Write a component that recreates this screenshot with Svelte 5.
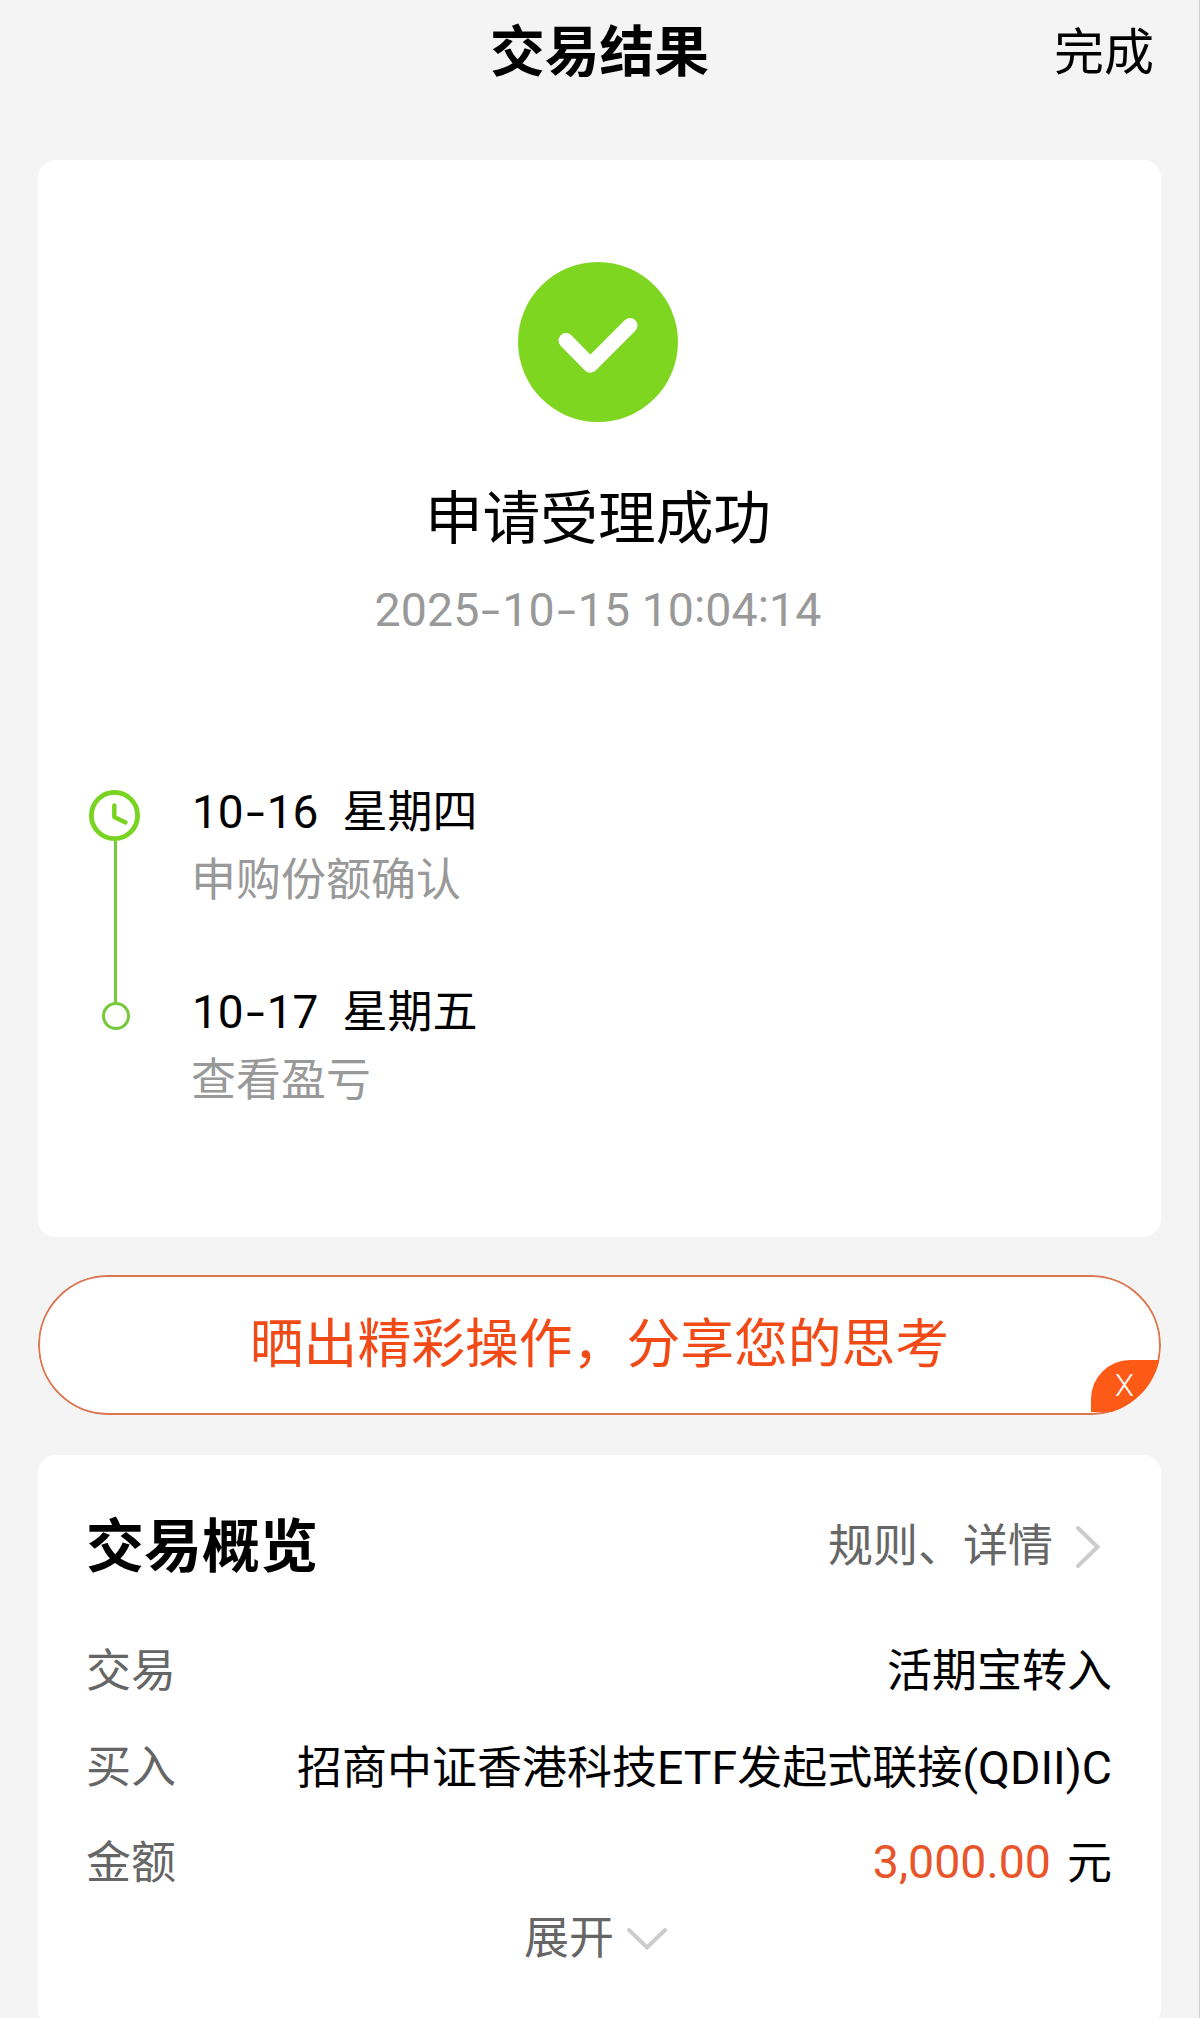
<script lang="ts">
  type Step = { month: string; day: string; weekday: string; note: string }

  const steps: Step[] = [
    { month: '10', day: '16', weekday: '星期四', note: '申购份额确认' },
    { month: '10', day: '17', weekday: '星期五', note: '查看盈亏' },
  ]
</script>

<div class="page">
  <header class="top-bar">
    <h1>交易结果</h1>
    <button class="done" type="button">完成</button>
  </header>

  <section class="card result">
    <svg class="success" viewBox="0 0 160 160" aria-hidden="true">
      <circle cx="80" cy="80" r="80" fill="#7ed621" />
      <path d="M48 78.5 72.3 103.2 112 63.5" fill="none" stroke="#fff" stroke-width="15" stroke-linecap="round" stroke-linejoin="round" />
    </svg>
    <h2>申请受理成功</h2>
    <time class="stamp">2025<i>-</i>10<i>-</i>15 10<b>:</b>04<b>:</b>14</time>

    <ol class="timeline">
      {#each steps as step, i}
        <li>
          <div class="rail">
            {#if i === 0}
              <svg class="clock" viewBox="0 0 51 51" aria-hidden="true">
                <circle cx="25.5" cy="25.5" r="23.1" fill="none" stroke="#79d321" stroke-width="4.8" />
                <path d="M25.3 15.5V27L36.5 32.5" fill="none" stroke="#79d321" stroke-width="4.4" stroke-linecap="round" stroke-linejoin="round" />
              </svg>
              <span class="line"></span>
            {:else}
              <span class="line lead"></span>
              <span class="dot"></span>
            {/if}
          </div>
          <div class="step">
            <p class="day"><span class="date">{step.month}<i>-</i>{step.day}</span><span>{step.weekday}</span></p>
            <p class="note">{step.note}</p>
          </div>
        </li>
      {/each}
    </ol>
  </section>

  <div class="share">
    <span>晒出精彩操作，分享您的思考</span>
    <button class="close" type="button">X</button>
  </div>

  <section class="card overview">
    <div class="overview-head">
      <h3>交易概览</h3>
      <a class="rules" href="#rules">
        规则、详情
        <svg viewBox="0 0 28 46" aria-hidden="true">
          <path d="M4 4 23.5 23 4 42" fill="none" stroke="#ccc" stroke-width="4" stroke-linecap="round" />
        </svg>
      </a>
    </div>

    <dl>
      <div class="row">
        <dt>交易</dt>
        <dd>活期宝转入</dd>
      </div>
      <div class="row">
        <dt>买入</dt>
        <dd>招商中证香港科技<span class="latin">ETF</span>发起式联接<span class="latin">(QDII)C</span></dd>
      </div>
      <div class="row">
        <dt>金额</dt>
        <dd class="money"><span class="amount">3,000.00</span><span>元</span></dd>
      </div>
    </dl>

    <button class="expand" type="button">
      展开
      <svg viewBox="0 0 42 26" aria-hidden="true">
        <path d="M3 4 21 21.5 39 4" fill="none" stroke="#ccc" stroke-width="4" stroke-linecap="round" />
      </svg>
    </button>
  </section>
</div>

<style>
  :global(body) {
    background: #f4f4f4;
  }

  .page {
    box-sizing: border-box;
    height: 2018px;
    overflow: hidden;
    padding: 0 38px;
    border-right: 1px solid #cfcfcf;
    background: #f4f4f4;
    color: #000;
    font-family: Roboto, 'Noto Sans CJK SC', sans-serif;
    font-size: 45px;
    line-height: 60px;
  }

  h1,
  h2,
  h3,
  p,
  ol,
  dl,
  dd {
    margin: 0;
    padding: 0;
  }

  button {
    padding: 0;
    border: none;
    background: none;
    color: inherit;
    font: inherit;
  }

  i,
  b {
    font-style: normal;
    font-weight: inherit;
  }

  .top-bar {
    display: grid;
    grid-template-columns: 1fr auto 1fr;
    align-items: center;
    height: 104px;
    margin-bottom: 56px;
  }

  .top-bar h1 {
    grid-column: 2;
    font-size: 54.8px;
    font-weight: 700;
  }

  .done {
    justify-self: end;
    margin: 2px 7px 0 0;
    font-size: 50px;
  }

  .card {
    box-sizing: border-box;
    border-radius: 18px;
    background: #fff;
  }

  .result {
    display: flex;
    flex-direction: column;
    align-items: center;
    height: 1077px;
    padding: 102px 54px 0 51px;
  }

  .success {
    width: 160px;
    height: 160px;
  }

  .result h2 {
    margin-top: 57px;
    font-size: 57.7px;
    font-weight: 400;
    line-height: 80px;
  }

  .stamp {
    margin-top: 21px;
    color: #999;
    font-size: 46.5px;
    letter-spacing: 0.05px;
  }

  .stamp i,
  .date i {
    display: inline-block;
    width: 23px;
    text-align: center;
    transform: scaleX(1.45);
  }

  .stamp b {
    position: relative;
    top: -4px;
  }

  .timeline {
    align-self: stretch;
    margin-top: 143px;
    list-style: none;
  }

  .timeline li {
    display: flex;
    gap: 48px;
    height: 200px;
  }

  .rail {
    display: flex;
    flex-direction: column;
    align-items: center;
    width: 54px;
  }

  .clock {
    flex: none;
    width: 51px;
    height: 51px;
    margin: 7px 3px 0 0;
  }

  .line {
    flex: 1;
    width: 3px;
    margin-right: 1px;
    background: #75c93a;
  }

  .line.lead {
    flex: none;
    height: 19px;
  }

  .dot {
    box-sizing: border-box;
    width: 28px;
    height: 28px;
    border: 3px solid #75c93a;
    border-radius: 50%;
  }

  .day {
    display: flex;
    gap: 24px;
  }

  .date {
    margin: -1px 0 1px 1px;
    font-size: 46px;
  }

  .note {
    margin-top: 8px;
    color: #999;
  }

  .share {
    position: relative;
    display: flex;
    align-items: center;
    justify-content: center;
    box-sizing: border-box;
    height: 140px;
    margin: 38px 0 40px;
    padding-bottom: 1px;
    border: 2px solid #dc7650;
    border-radius: 70px;
    clip-path: inset(0 round 70px);
    background: #fff;
    color: #f24a17;
    font-size: 53.8px;
  }

  .close {
    position: absolute;
    right: -2px;
    bottom: 1px;
    width: 70px;
    height: 52px;
    border-radius: 39px 0 0 0;
    background: #fd5a17;
    color: #fff;
    font-size: 31px;
    font-weight: 300;
    line-height: 50px;
    text-indent: -3px;
  }

  .overview {
    height: 572px;
    padding: 60px 49px 0 48px;
  }

  .overview-head {
    display: flex;
    align-items: center;
    justify-content: space-between;
    height: 64px;
    margin-bottom: 45px;
  }

  .overview-head h3 {
    font-size: 58px;
    font-weight: 700;
  }

  .rules {
    display: flex;
    align-items: center;
    gap: 21px;
    margin-right: 10px;
    color: #666;
    text-decoration: none;
  }

  .rules svg {
    width: 28px;
    height: 46px;
  }

  .row {
    display: flex;
    align-items: center;
    justify-content: space-between;
    height: 96px;
  }

  dt {
    color: #666;
  }

  .latin {
    font-size: 46.4px;
  }

  .money {
    display: flex;
    gap: 16px;
  }

  .amount {
    margin-top: -2px;
    color: #e9552a;
    font-size: 46.5px;
  }

  .expand {
    display: flex;
    align-items: center;
    gap: 12px;
    margin: -3px 0 0 438px;
    color: #666;
  }

  .expand svg {
    width: 42px;
    height: 26px;
  }
</style>
